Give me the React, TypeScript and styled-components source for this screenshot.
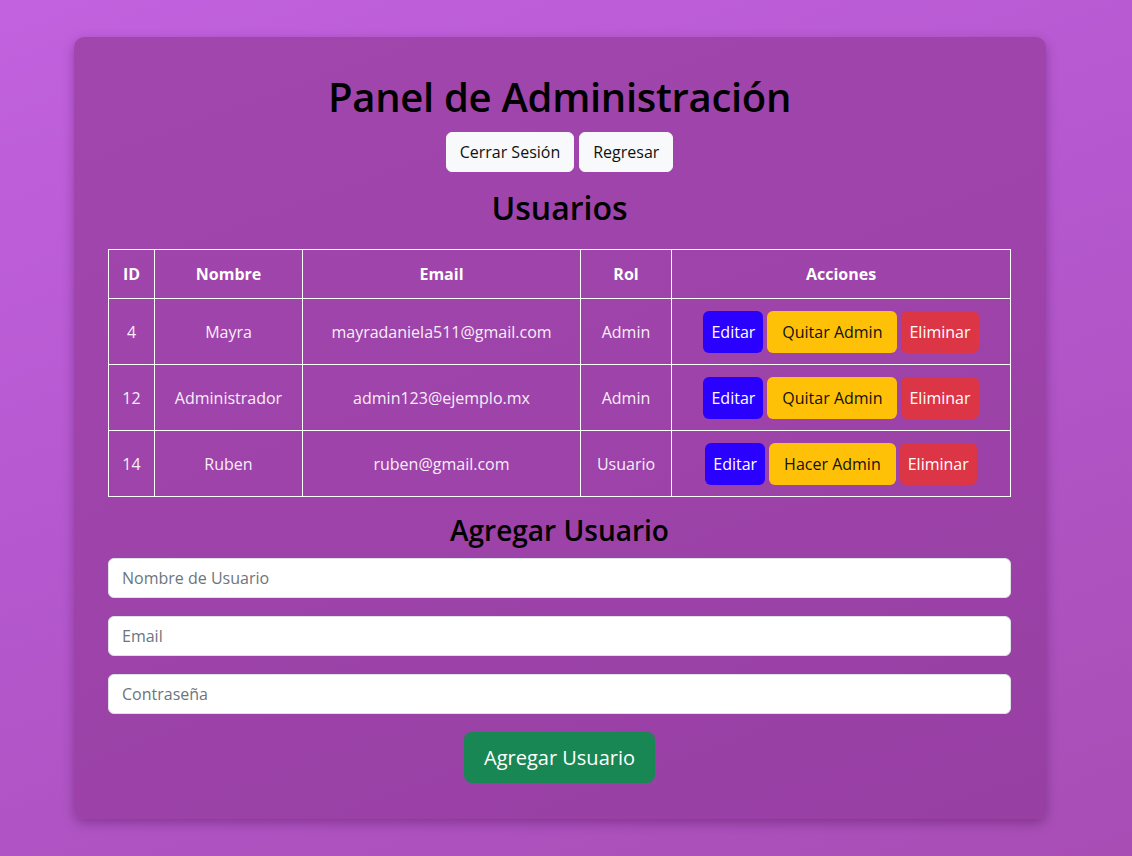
import React from "react";
import styled, { createGlobalStyle } from "styled-components";

const GlobalStyle = createGlobalStyle`
  html, body {
    margin: 0;
    padding: 0;
  }
  body {
    min-height: 856px;
    background: linear-gradient(160deg, #c262de 0%, #b558cf 45%, #a84db4 100%);
    font-family: "Open Sans", "Noto Sans", sans-serif;
  }
`;

const Page = styled.div`
  padding: 37px 86px 37px 74px;
`;

const Card = styled.div`
  width: 972px;
  box-sizing: border-box;
  padding: 36px 35px 36px 34px;
  background: linear-gradient(160deg, #a046ad 0%, #9d43a9 50%, #983fa4 100%);
  border-radius: 10px;
  box-shadow: 0 4px 12px rgba(60, 0, 70, 0.35);
  display: flex;
  flex-direction: column;
  align-items: center;
`;

const Title = styled.h1`
  margin: 0 0 11px;
  font-size: 40px;
  line-height: 48px;
  font-weight: 600;
  letter-spacing: -0.3px;
  color: #000;
`;

const TopActions = styled.div`
  display: flex;
  gap: 5px;
`;

const LightButton = styled.button`
  height: 40px;
  padding: 0 13px;
  font-family: inherit;
  font-size: 16px;
  color: #111;
  background: #f8f9fa;
  border: 1px solid #f8f9fa;
  border-radius: 6px;
`;

const SectionTitle = styled.h2<{ $size: number; $top: number; $bottom: number }>`
  margin: ${(p) => p.$top}px 0 ${(p) => p.$bottom}px;
  font-size: ${(p) => p.$size}px;
  line-height: 1.2;
  font-weight: 600;
  color: #000;
`;

const Table = styled.table`
  width: 903px;
  table-layout: fixed;
  border-collapse: collapse;
  color: #fff;
  font-size: 16px;
  line-height: 24px;
`;

const Th = styled.th<{ $w?: number }>`
  width: ${(p) => (p.$w ? `${p.$w}px` : "auto")};
  border: 1px solid #fff;
  padding: 12px 0;
  font-weight: 700;
  text-align: center;
`;

const Td = styled.td`
  border: 1px solid #fff;
  padding: 12px 0 11px;
  text-align: center;
  color: #f8eef8;
  white-space: nowrap;
`;

const ActionGroup = styled.div`
  display: flex;
  justify-content: center;
  gap: 4px;
`;

const ActionButton = styled.button<{ $bg: string; $fg: string; $px: number }>`
  height: 42px;
  padding: 0 ${(p) => p.$px}px;
  font-family: inherit;
  font-size: 16px;
  white-space: nowrap;
  background: ${(p) => p.$bg};
  color: ${(p) => p.$fg};
  border: none;
  border-radius: 6px;
`;

const Form = styled.form`
  width: 903px;
  display: flex;
  flex-direction: column;
  align-items: center;
  gap: 18px;
`;

const Input = styled.input`
  width: 100%;
  box-sizing: border-box;
  height: 40px;
  padding: 0 13px;
  font-family: inherit;
  font-size: 16px;
  background: #fff;
  border: 1px solid #dee2e6;
  border-radius: 6px;
  &::placeholder {
    color: #6c757d;
  }
`;

const SubmitButton = styled.button`
  height: 51px;
  padding: 0 20px;
  font-family: inherit;
  font-size: 20px;
  color: #fff;
  background: #198754;
  border: none;
  border-radius: 8px;
`;

type User = { id: number; name: string; email: string; role: string };

const users: User[] = [
  { id: 4, name: "Mayra", email: "mayradaniela511@gmail.com", role: "Admin" },
  { id: 12, name: "Administrador", email: "admin123@ejemplo.mx", role: "Admin" },
  { id: 14, name: "Ruben", email: "ruben@gmail.com", role: "Usuario" },
];

export default function App() {
  return (
    <>
      <GlobalStyle />
      <Page>
        <Card>
          <Title>Panel de Administración</Title>
          <TopActions>
            <LightButton>Cerrar Sesión</LightButton>
            <LightButton>Regresar</LightButton>
          </TopActions>
          <SectionTitle $size={32} $top={17} $bottom={22}>
            Usuarios
          </SectionTitle>
          <Table>
            <thead>
              <tr>
                <Th $w={45}>ID</Th>
                <Th $w={147}>Nombre</Th>
                <Th $w={277}>Email</Th>
                <Th $w={90}>Rol</Th>
                <Th>Acciones</Th>
              </tr>
            </thead>
            <tbody>
              {users.map((u) => (
                <tr key={u.id}>
                  <Td>{u.id}</Td>
                  <Td>{u.name}</Td>
                  <Td>{u.email}</Td>
                  <Td>{u.role}</Td>
                  <Td>
                    <ActionGroup>
                      <ActionButton $bg="#2a00ff" $fg="#fff" $px={8}>
                        Editar
                      </ActionButton>
                      <ActionButton $bg="#ffc107" $fg="#111" $px={15}>
                        {u.role === "Admin" ? "Quitar Admin" : "Hacer Admin"}
                      </ActionButton>
                      <ActionButton $bg="#dc3545" $fg="#fff" $px={8}>
                        Eliminar
                      </ActionButton>
                    </ActionGroup>
                  </Td>
                </tr>
              ))}
            </tbody>
          </Table>
          <SectionTitle $size={28} $top={17} $bottom={10}>
            Agregar Usuario
          </SectionTitle>
          <Form onSubmit={(e) => e.preventDefault()}>
            <Input placeholder="Nombre de Usuario" />
            <Input placeholder="Email" />
            <Input placeholder="Contraseña" type="password" />
            <SubmitButton type="submit">Agregar Usuario</SubmitButton>
          </Form>
        </Card>
      </Page>
    </>
  );
}
